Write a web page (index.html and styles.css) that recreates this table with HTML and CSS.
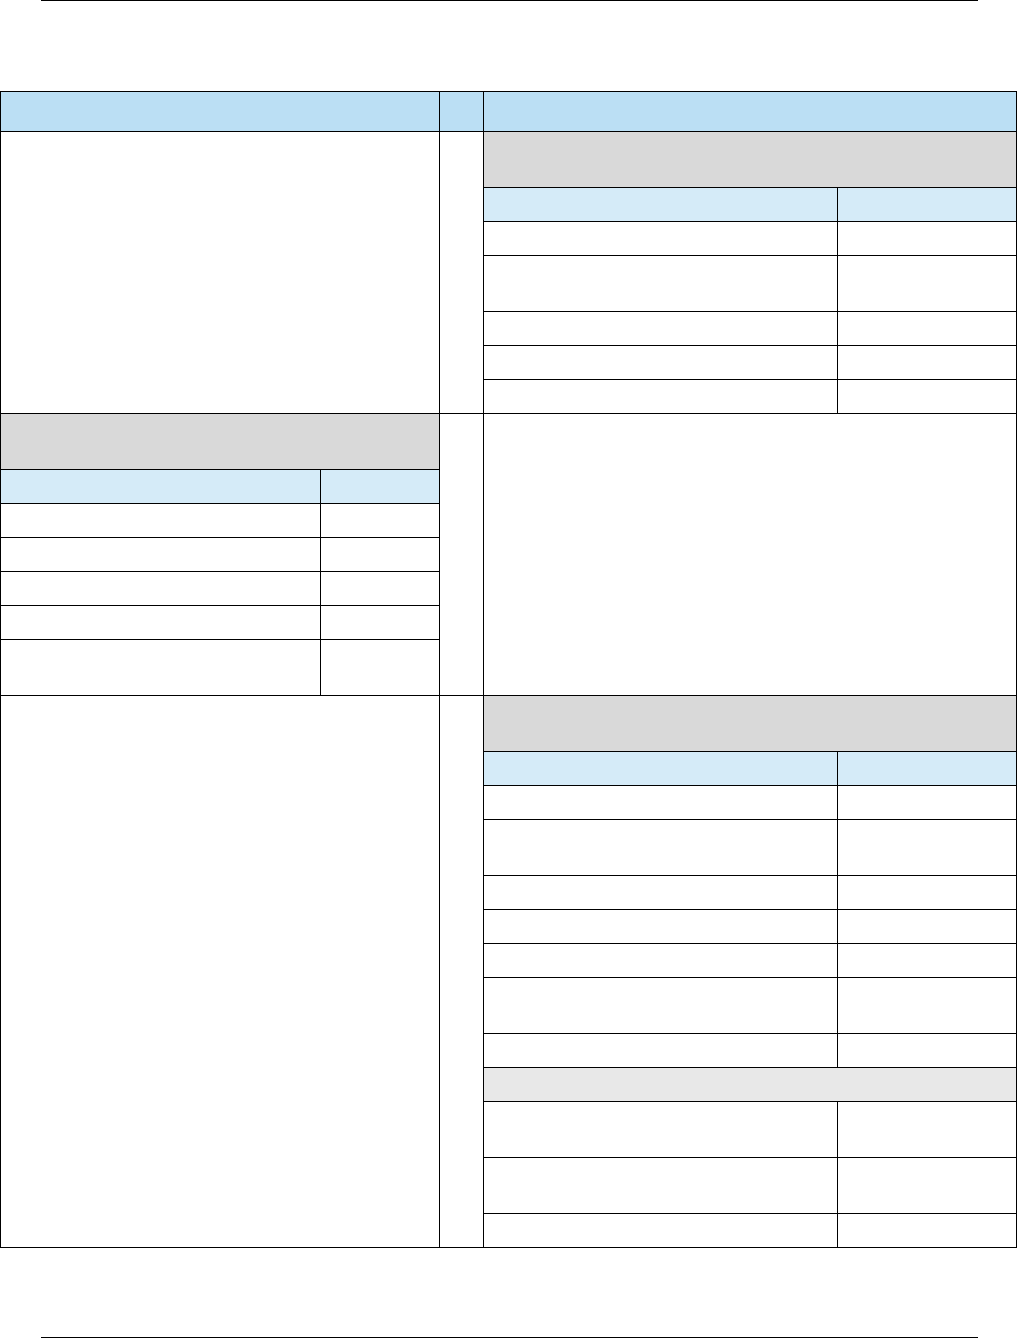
FILE: index.html
```html
<!DOCTYPE html>
<html lang="en">
<head>
    <meta charset="UTF-8">
    <meta name="viewport" content="width=device-width, initial-scale=1.0">
    <title>Document Page</title>
    <link rel="stylesheet" href="styles.css">
</head>
<body>
    <div class="page">
        <div class="rule"></div>

        <div class="layout">
            <!-- header row -->
            <div class="cell head"></div>
            <div class="cell head"></div>
            <div class="cell head"></div>

            <!-- section 1 -->
            <div class="cell"></div>
            <div class="cell"></div>
            <div class="cell">
                <div class="sub-table wide">
                    <div class="title tall"></div>
                    <div class="col-head"></div>
                    <div class="col-head"></div>
                    <div></div><div></div>
                    <div class="tall"></div><div class="tall"></div>
                    <div></div><div></div>
                    <div></div><div></div>
                    <div></div><div></div>
                </div>
            </div>

            <!-- section 2 -->
            <div class="cell">
                <div class="sub-table narrow">
                    <div class="title tall"></div>
                    <div class="col-head"></div>
                    <div class="col-head"></div>
                    <div></div><div></div>
                    <div></div><div></div>
                    <div></div><div></div>
                    <div></div><div></div>
                    <div class="tall"></div><div class="tall"></div>
                </div>
            </div>
            <div class="cell"></div>
            <div class="cell"></div>

            <!-- section 3 -->
            <div class="cell"></div>
            <div class="cell"></div>
            <div class="cell">
                <div class="sub-table wide">
                    <div class="title tall"></div>
                    <div class="col-head"></div>
                    <div class="col-head"></div>
                    <div></div><div></div>
                    <div class="tall"></div><div class="tall"></div>
                    <div></div><div></div>
                    <div></div><div></div>
                    <div></div><div></div>
                    <div class="tall"></div><div class="tall"></div>
                    <div></div><div></div>
                    <div class="group"></div>
                    <div class="tall"></div><div class="tall"></div>
                    <div class="tall"></div><div class="tall"></div>
                    <div></div><div></div>
                </div>
            </div>
        </div>

        <div class="rule bottom"></div>
    </div>
</body>
</html>
```

FILE: styles.css
```css
* {
    margin: 0;
    padding: 0;
    box-sizing: border-box;
    font-family: 'Liberation Sans', Arial, sans-serif;
}

body {
    background-color: white;
}

.page {
    width: 1017px;
}

.rule {
    margin-left: 41px;
    width: 937px;
    height: 1px;
    background-color: #000;
}

.rule.bottom {
    margin-top: 89px;
}

.layout {
    margin-top: 90px;
    display: grid;
    grid-template-columns: 438px 43px 532px;
    gap: 1px;
    padding: 1px;
    background-color: #000;
}

.cell {
    background-color: white;
}

.cell.head {
    height: 39px;
    background-color: #bbdff4;
}

.sub-table {
    display: grid;
    gap: 1px;
    background-color: #000;
}

.sub-table.wide {
    grid-template-columns: 353px 178px;
}

.sub-table.narrow {
    grid-template-columns: 319px 118px;
}

.sub-table > div {
    height: 33px;
    background-color: white;
}

.sub-table > div.tall {
    height: 55px;
}

.sub-table .title {
    grid-column: 1 / -1;
    background-color: #d9d9d9;
}

.sub-table .col-head {
    background-color: #d5ebf8;
}

.sub-table .group {
    grid-column: 1 / -1;
    background-color: #e8e8e8;
}
```
